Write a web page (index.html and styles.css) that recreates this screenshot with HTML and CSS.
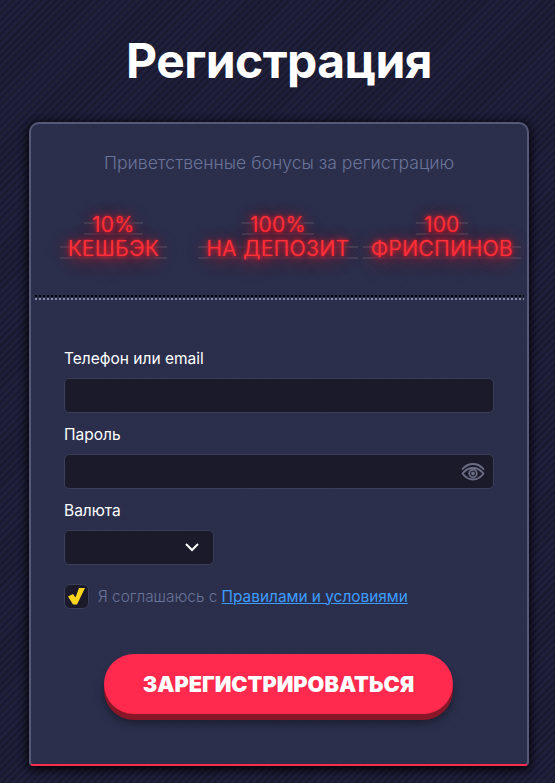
FILE: index.html
```html
<!DOCTYPE html>
<html lang="ru">
<head>
<meta charset="utf-8">
<title>Регистрация</title>
<link rel="stylesheet" href="styles.css">
</head>
<body>
<main class="page">
  <h1 class="title">Регистрация</h1>
  <section class="card">
    <div class="promo">
      <p class="promo-title">Приветственные бонусы за регистрацию</p>
      <div class="bonuses">
        <div class="bonus"><span class="neon">10%</span><span class="neon">КЕШБЭК</span></div>
        <div class="bonus"><span class="neon">100%</span><span class="neon">НА ДЕПОЗИТ</span></div>
        <div class="bonus"><span class="neon">100</span><span class="neon">ФРИСПИНОВ</span></div>
      </div>
    </div>
    <div class="stitch"></div>
    <form class="form">
      <label class="label">Телефон или email</label>
      <div class="input"></div>
      <label class="label">Пароль</label>
      <div class="input input-password">
        <svg class="eye" width="24" height="18" viewBox="0 0 24 18" fill="none" stroke="#6b6d85" stroke-width="1.8" stroke-linecap="round">
          <path d="M1.500 6C4.500 2.600 8 1 12 1s7.500 1.600 10.500 5"/>
          <path d="M1.500 10.500C4.500 6.800 8 5 12 5s7.500 1.800 10.500 5.500C19.500 14.700 16 16.500 12 16.500S4.500 14.700 1.500 10.500Z"/>
          <circle cx="12" cy="10.500" r="3.800"/>
          <circle cx="12" cy="10.500" r="1" fill="#6b6d85"/>
        </svg>
      </div>
      <label class="label">Валюта</label>
      <div class="input input-select">
        <svg width="14" height="9" viewBox="0 0 14 9" fill="none" stroke="#ffffff" stroke-width="2"><path d="M1 1l6 6 6-6"/></svg>
      </div>
      <div class="agree">
        <span class="checkbox">
          <svg width="17" height="17" viewBox="0 0 17 17"><path d="M0 8.500L5 6l2.500 3.500L11 0h6L9 16.500H5Z" fill="#ffd51e"/></svg>
        </span>
        <span class="agree-text">Я соглашаюсь с <a class="link" href="#">Правилами и условиями</a></span>
      </div>
      <button class="submit" type="button">ЗАРЕГИСТРИРОВАТЬСЯ</button>
    </form>
  </section>
</main>
</body>
</html>
```
FILE: styles.css
```css
* { box-sizing: border-box; }
html, body { margin: 0; height: 100%; }
body {
  overflow: hidden;
  font-family: Inter, "Noto Sans", sans-serif;
  background-color: #1b1b33;
  background-image: repeating-linear-gradient(-45deg, #191930 0, #191930 2.5px, #20203c 2.5px, #20203c 5px);
}
.page {
  width: 500px;
  margin-left: 29px;
  padding-top: 30px;
}
.title {
  margin: 0 0 31px;
  height: 61px;
  line-height: 61px;
  text-align: center;
  font-size: 48px;
  font-weight: 700;
  letter-spacing: -0.55px;
  color: #ffffff;
}
.card {
  position: relative;
  z-index: 0;
  height: 644px;
  border: 2px solid #565a78;
  border-bottom-color: #ff2d4f;
  border-radius: 10px 10px 4px 4px;
  background-color: #2a2e4b;
  background-image: repeating-linear-gradient(45deg, rgba(255,255,255,0.012) 0 1px, transparent 1px 3px);
  box-shadow: 0 4px 10px rgba(0,0,0,0.75), -2px 0 8px rgba(0,0,0,0.3), 2px 0 8px rgba(0,0,0,0.3);
}
.promo { height: 171px; padding-top: 28px; }
.promo-title {
  margin: 0;
  line-height: 22px;
  text-align: center;
  font-size: 17.600px;
  font-weight: 300;
  color: #6a7499;
}
.bonuses {
  display: grid;
  grid-template-columns: 165px 164px 164px;
  margin-top: 39px;
}
.bonus { display: flex; flex-direction: column; align-items: center; }
.neon {
  position: relative;
  padding: 0 8px;
  line-height: 24px;
  font-size: 21px;
  font-weight: 300;
  letter-spacing: 0.45px;
  white-space: nowrap;
  color: #ff3038;
  text-shadow: 0 0 1px #ff2a35, 0 0 4px rgba(255,30,40,0.95), 0 1px 9px rgba(255,30,40,0.8), 0 3px 16px rgba(255,30,40,0.65), 0 4px 26px rgba(255,30,40,0.45);
}
.neon::before {
  content: "";
  position: absolute;
  z-index: -1;
  left: 0;
  right: 0;
  top: 9px;
  height: 9px;
  border-top: 2px solid;
  border-bottom: 2px solid;
  border-image: linear-gradient(90deg, rgba(140,140,150,0.2) 0, rgba(140,140,150,0.2) 9px, rgba(140,140,150,0.07) 14px, rgba(140,140,150,0.07) calc(100% - 14px), rgba(140,140,150,0.2) calc(100% - 9px)) 1;
}
.stitch {
  height: 6px;
  margin: 0 0 0 3px;
  width: 490px;
  background-image:
    radial-gradient(circle at 2px 1px, rgba(0,0,0,0.9) 0 1.100px, transparent 1.600px),
    radial-gradient(circle at 2px 4px, #8a8da5 0 1.100px, transparent 1.600px);
  background-size: 4px 6px;
}
.form { padding: 48px 33px 0; display: flex; flex-direction: column; }
.label {
  height: 20px;
  line-height: 20px;
  margin-bottom: 9px;
  font-size: 15.500px;
  color: #ffffff;
}
.input {
  display: flex;
  align-items: center;
  justify-content: flex-end;
  height: 35px;
  margin-bottom: 12px;
  background: #1a1a2b;
  border: 1px solid #3b3e58;
  border-radius: 5px;
}
.input-password { padding-right: 8px; }
.input-select { width: 150px; padding-right: 14px; margin-bottom: 19px; }
.agree { display: flex; align-items: center; gap: 9px; height: 24px; }
.checkbox {
  display: flex;
  align-items: center;
  justify-content: center;
  width: 25px;
  height: 25px;
  background: #1a1a2b;
  border: 1px solid #3b3e58;
  border-radius: 6px;
}
.agree-text { font-size: 15.400px; font-weight: 300; color: #6a7499; }
.link { color: #3d9dff; font-weight: 400; text-decoration: underline; }
.submit {
  align-self: flex-start;
  width: 349px;
  height: 60px;
  margin: 46px 0 0 40px;
  border: 0;
  border-radius: 30px;
  background: #ff2a4d;
  box-shadow: 0 6px 0 #8a1727, 0 9px 10px rgba(0,0,0,0.4);
  font-family: Inter, sans-serif;
  font-size: 21.700px;
  font-weight: 900;
  color: #ffffff;
}
```
